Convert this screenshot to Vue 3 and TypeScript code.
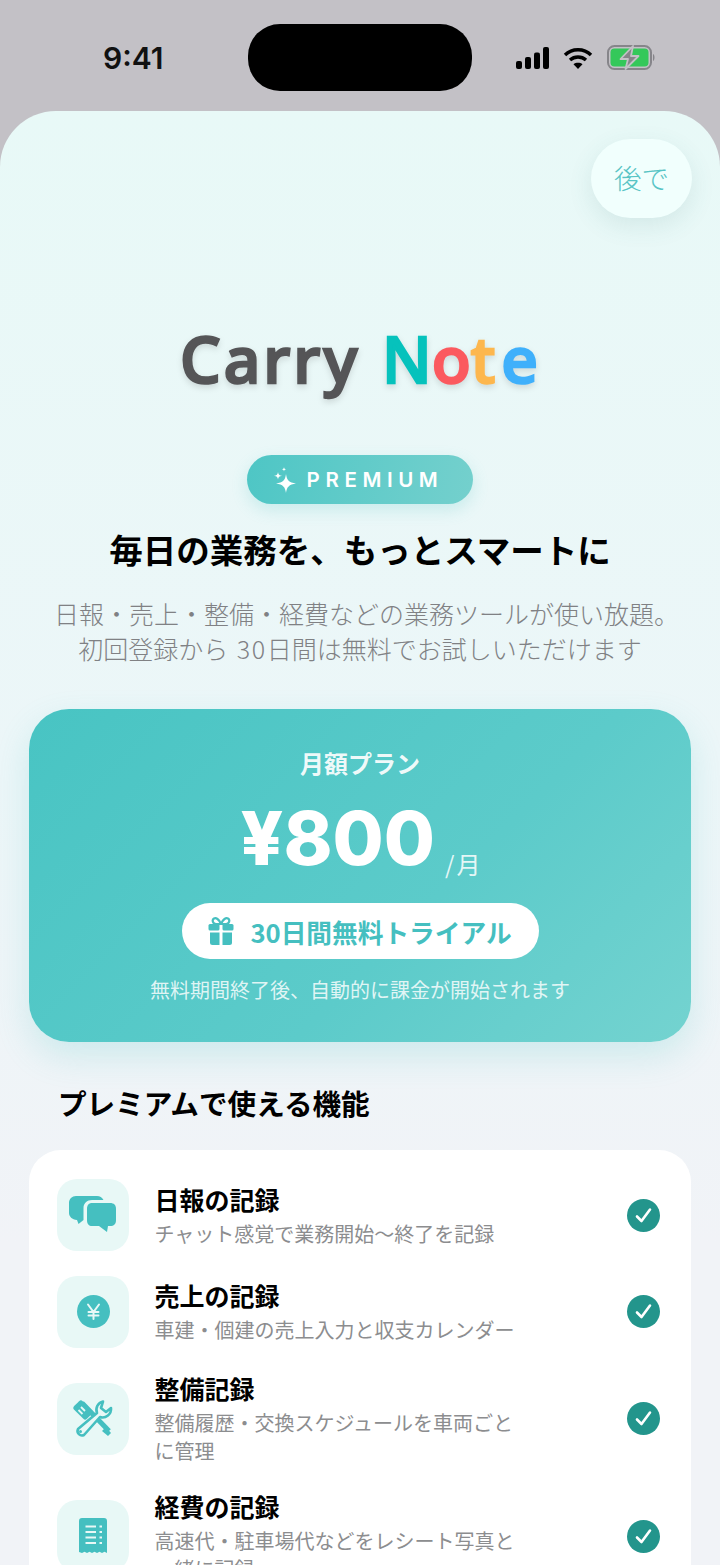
<script setup lang="ts">
type Feature = {
	id: string;
	title: string;
	desc: string;
};

const features: Feature[] = [
	{ id: 'chat', title: '日報の記録', desc: 'チャット感覚で業務開始〜終了を記録' },
	{ id: 'yen', title: '売上の記録', desc: '車建・個建の売上入力と収支カレンダー' },
	{ id: 'tools', title: '整備記録', desc: '整備履歴・交換スケジュールを車両ごとに管理' },
	{ id: 'receipt', title: '経費の記録', desc: '高速代・駐車場代などをレシート写真と一緒に記録' },
];
</script>

<template>
	<div class="screen">
		<header class="status-bar">
			<span class="time">9:41</span>
			<div class="island"></div>
			<div class="status-icons">
				<svg width="36" height="22" viewBox="0 0 36 22" fill="#000">
					<rect x="1" y="14" width="6" height="8" rx="2" />
					<rect x="10" y="10" width="6" height="12" rx="2" />
					<rect x="19" y="5.500" width="6" height="16.500" rx="2" />
					<rect x="28" y="0" width="6" height="22" rx="2" />
				</svg>
				<svg width="30" height="22" viewBox="0 0 30 22" fill="none" stroke="#000" stroke-width="3.400">
					<path d="M2 8 C9 1 21 1 28 8" />
					<path d="M7 13 C11.500 9 18.500 9 23 13" />
					<path d="M15 22 L10.500 17.200 C13 15.300 17 15.300 19.500 17.200 Z" fill="#000" stroke="none" />
				</svg>
				<svg class="battery" width="49" height="25" viewBox="0 0 49 25">
					<rect x="1" y="1" width="43" height="23" rx="6.500" fill="none" stroke="#86858a" stroke-width="2" />
					<rect x="3.500" y="3.500" width="38" height="18" rx="4" fill="#34c85a" />
					<path d="M46 9 C48 9.500 48 15.500 46 16 Z" fill="#86858a" />
					<path d="M26 1 L13.500 14 H21 L18.500 24 L31.500 11 H24 Z" fill="#86858a" stroke="#c3c1c6" stroke-width="1.800" stroke-linejoin="round" />
				</svg>
			</div>
		</header>

		<main class="sheet">
			<button class="later" type="button">後で</button>

			<h1 class="logo">
				<span class="logo-carry">Carry</span>
				<span class="c-teal">N</span>
				<span class="c-red">o</span>
				<span class="c-orange">t</span>
				<span class="c-blue">e</span>
			</h1>

			<div class="badge">
				<svg width="24" height="26" viewBox="0 0 24 26" fill="#fff">
					<path d="M13 7 C13.800 13 16 15.500 23 16.500 C16 17.500 13.800 20 13 26 C12.200 20 10 17.500 3 16.500 C10 15.500 12.200 13 13 7 Z" />
					<path d="M5 5 C5.300 7.500 6.200 8.400 9 8.800 C6.200 9.200 5.300 10.100 5 12.500 C4.700 10.100 3.800 9.200 1 8.800 C3.800 8.400 4.700 7.500 5 5 Z" />
					<path d="M11 0 C11.200 1.600 11.700 2.100 13.200 2.300 C11.700 2.500 11.200 3 11 4.600 C10.800 3 10.300 2.500 8.800 2.300 C10.300 2.100 10.800 1.600 11 0 Z" />
				</svg>
				<span>PREMIUM</span>
			</div>

			<h2 class="headline">毎日の業務を、もっとスマートに</h2>
			<p class="lead"><span class="lead-first">日報・売上・整備・経費などの業務ツールが使い放題。</span><br>初回登録から <span class="lead-num">30</span>日間は無料でお試しいただけます</p>

			<section class="plan">
				<div class="plan-name">月額プラン</div>
				<div class="price">
					<span class="amount">¥800</span>
					<span class="unit">/月</span>
				</div>
				<div class="trial">
					<svg width="26" height="28" viewBox="0 0 26 28" fill="#45bfc0">
						<path d="M13 7 C11 2 8 0.500 6 1.500 C3.500 3 5 7 8 7 Z M13 7 C15 2 18 0.500 20 1.500 C22.500 3 21 7 18 7 Z" fill="none" stroke="#45bfc0" stroke-width="2.200" />
						<rect x="0.500" y="7" width="11" height="6.500" rx="1.500" />
						<rect x="14.500" y="7" width="11" height="6.500" rx="1.500" />
						<path d="M2 15.500 H11.500 V28 H4.500 A2.500 2.500 0 0 1 2 25.500 Z" />
						<path d="M14.500 15.500 H24 V25.500 A2.500 2.500 0 0 1 21.500 28 H14.500 Z" />
					</svg>
					<span>30日間無料トライアル</span>
				</div>
				<p class="plan-note">無料期間終了後、自動的に課金が開始されます</p>
			</section>

			<h3 class="section-title">プレミアムで使える機能</h3>

			<section class="features">
				<div v-for="item in features" :key="item.id" class="feature">
					<div class="feature-icon">
						<svg v-if="item.id === 'chat'" width="48" height="38" viewBox="0 0 48 38" fill="#45bfc0">
							<path d="M7 0 H28 C31 0 33 1.500 34.500 4 H23 C18 4 14.500 7.500 14.500 12 V24 L9.500 28 L8 24 C3 23.500 0 20.500 0 17 V7 C0 3 3 0 7 0 Z" />
							<path d="M23 7 H41 C45 7 47 9 47 13 V24 C47 28 45 30 41 30 H39 L38 36 L30 30 H23 C20 30 18 28 18 24 V13 C18 9 20 7 23 7 Z" />
						</svg>
						<svg v-else-if="item.id === 'yen'" width="33" height="33" viewBox="0 0 33 33">
							<circle cx="16.500" cy="16.500" r="16.500" fill="#45bfc0" />
							<path d="M11 9.500 L16.500 17 L22 9.500 M16.500 17 V24 M11.500 17 H21.500 M11.500 20.500 H21.500" fill="none" stroke="#e8f8f6" stroke-width="2" stroke-linecap="round" />
						</svg>
						<svg v-else-if="item.id === 'tools'" width="40" height="38" viewBox="0 0 40 38">
							<path d="M9 3 L36 31" fill="none" stroke="#45bfc0" stroke-width="5" />
							<path d="M33 27 L38 33 L35 36 L29 31 Z" fill="#45bfc0" />
							<rect x="-6" y="-9" width="12" height="18" rx="2.500" transform="translate(10 10) rotate(-45)" fill="#45bfc0" />
							<path d="M8 7 L12 11 M5.500 10 L9.500 14" fill="none" stroke="#e8f8f6" stroke-width="1.800" />
							<path d="M30 1.500 A8.500 8.500 0 0 0 24 13 L5 29 A4.500 4.500 0 0 0 11 35 L27 17 A8.500 8.500 0 0 0 38 8 L33 12 L28 8 Z" fill="#e8f8f6" stroke="#45bfc0" stroke-width="2.600" stroke-linejoin="round" />
							<circle cx="7.500" cy="31.500" r="1.500" fill="#45bfc0" />
						</svg>
						<svg v-else width="28" height="36" viewBox="0 0 28 36">
							<path d="M3 0 H25 A3 3 0 0 1 28 3 V35 L25.500 33.800 L23 35 L20.500 33.800 L18 35 L15.500 33.800 L13 35 L10.500 33.800 L8 35 L5.500 33.800 L3 35 L0 34 V3 A3 3 0 0 1 3 0 Z" fill="#45bfc0" />
							<path d="M6.500 8.500 H17 M6.500 14 H17 M6.500 19.500 H17 M6.500 25 H17 M20.500 8.500 H23 M20.500 14 H23 M20.500 19.500 H23 M20.500 25 H23" stroke="#e8f8f6" stroke-width="1.800" />
						</svg>
					</div>
					<div class="feature-text">
						<div class="feature-title">{{ item.title }}</div>
						<div class="feature-desc">{{ item.desc }}</div>
					</div>
					<svg class="check" width="33" height="33" viewBox="0 0 33 33">
						<circle cx="16.500" cy="16.500" r="16.500" fill="#23958c" />
						<path d="M10 17.500 L14.500 22 L23 10.500" fill="none" stroke="#fff" stroke-width="2.600" stroke-linecap="round" stroke-linejoin="round" />
					</svg>
				</div>
			</section>
		</main>
	</div>
</template>

<style>
html,
body {
	margin: 0;
	background: #c3c1c6;
}
</style>

<style scoped>
.screen {
	width: 720px;
	height: 1565px;
	overflow: hidden;
	background: #c3c1c6;
	font-family: Inter, "Noto Sans CJK JP", sans-serif;
	color: #000;
}

.status-bar {
	height: 111px;
	box-sizing: border-box;
	padding: 24px 0 0 103px;
	display: flex;
	align-items: flex-start;
}

.time {
	width: 145px;
	flex: 0 0 auto;
	margin-top: 16px;
	font-size: 30px;
	line-height: 36px;
	font-weight: 600;
	color: #111;
}

.island {
	width: 224px;
	height: 67px;
	flex: 0 0 auto;
	border-radius: 32px;
	background: #000;
}

.status-icons {
	margin-left: 43px;
	margin-top: 21px;
	display: flex;
	align-items: center;
	gap: 12px;
	flex: 0 0 auto;
}

.battery {
	margin-left: 2px;
}

.sheet {
	position: relative;
	height: 1454px;
	box-sizing: border-box;
	padding: 218px 29px 0;
	border-radius: 56px 56px 0 0;
	background: linear-gradient(180deg, #e8f9f7 0%, #ecf6f8 45%, #f1f3f7 78%);
	display: flex;
	flex-direction: column;
	align-items: center;
}

.sheet > * {
	flex-shrink: 0;
}

.later {
	position: absolute;
	top: 28px;
	right: 28px;
	width: 101px;
	height: 79px;
	padding: 0 0 3px;
	border: none;
	border-radius: 40px;
	background: #f1fffd;
	box-shadow: 0 8px 24px rgba(60, 120, 120, 0.12);
	color: #58c4c5;
	font-family: "Noto Sans CJK JP", sans-serif;
	font-size: 27.500px;
	font-weight: 300;
}

.logo {
	margin: 0;
	width: 360px;
	height: 72px;
	display: flex;
	font-family: "Noto Sans", sans-serif;
	font-size: 64px;
	line-height: 60px;
	font-weight: 500;
	-webkit-text-stroke: 2.500px currentColor;
	filter: blur(0.6px) drop-shadow(0 3px 3px rgba(0, 0, 0, 0.12));
}

.logo-carry {
	width: 202px;
	color: #555557;
	letter-spacing: 3px;
}

.c-teal {
	color: #06c2bc;
}

.c-red {
	color: #fb5a5f;
}

.c-orange {
	color: #fdb74e;
}

.c-blue {
	margin-left: 6px;
	color: #3fb0fb;
}

.badge {
	margin-top: 54px;
	width: 226px;
	height: 49px;
	box-sizing: border-box;
	padding-right: 4px;
	border-radius: 25px;
	background: linear-gradient(100deg, #4ec6c5, #74d0cd);
	box-shadow: 0 6px 16px rgba(78, 198, 197, 0.22);
	display: flex;
	align-items: center;
	justify-content: center;
	gap: 10px;
	color: #fff;
	font-size: 20.500px;
	font-weight: 600;
	letter-spacing: 5.600px;
}

.headline {
	margin: 25px 0 0;
	font-family: "Noto Sans CJK JP", sans-serif;
	font-size: 33.500px;
	line-height: 40px;
	font-weight: 700;
	color: #000;
}

.lead {
	margin: 27px -10px 0;
	text-align: center;
	font-family: "Noto Sans CJK JP", sans-serif;
	font-size: 25px;
	line-height: 35px;
	font-weight: 300;
	color: #808184;
	white-space: nowrap;
	word-spacing: 3px;
}

.lead-first {
	margin-right: -13px;
}

.lead-num {
	letter-spacing: 1.500px;
}

.plan {
	align-self: stretch;
	margin-top: 43px;
	height: 333px;
	box-sizing: border-box;
	padding-top: 38px;
	border-radius: 40px;
	background: linear-gradient(135deg, #48c4c3 0%, #5ccbca 60%, #74d3d0 100%);
	box-shadow: 0 14px 34px rgba(72, 196, 195, 0.2);
	display: flex;
	flex-direction: column;
	align-items: center;
	color: #fff;
	font-family: "Noto Sans CJK JP", sans-serif;
}

.plan-name {
	font-size: 24px;
	line-height: 34px;
	font-weight: 600;
	margin-top: -1px;
	color: rgba(255, 255, 255, 0.92);
}

.price {
	margin-top: 17px;
	height: 82px;
	padding-left: 3px;
	display: flex;
	align-items: flex-end;
	gap: 10px;
}

.amount {
	font-family: Inter, sans-serif;
	font-size: 74px;
	line-height: 82px;
	font-weight: 800;
}

.unit {
	font-size: 24px;
	line-height: 34px;
	margin-bottom: -2px;
	letter-spacing: 2px;
	color: rgba(255, 255, 255, 0.85);
}

.trial {
	margin-top: 24px;
	width: 357px;
	height: 56px;
	border-radius: 28px;
	background: #fff;
	display: flex;
	align-items: center;
	justify-content: center;
	gap: 16px;
	color: #45bfc0;
	font-size: 25.700px;
	font-weight: 700;
}

.plan-note {
	margin: 16px 0 0;
	font-size: 20px;
	line-height: 30px;
	color: rgba(255, 255, 255, 0.82);
}

.section-title {
	align-self: stretch;
	margin: 41px 0 0 29px;
	font-family: "Noto Sans CJK JP", sans-serif;
	font-size: 28.600px;
	line-height: 40px;
	font-weight: 700;
}

.features {
	align-self: stretch;
	margin-top: 27px;
	padding: 29px 31px 60px 28px;
	border-radius: 32px;
	background: #fff;
	display: flex;
	flex-direction: column;
	gap: 24.500px;
	font-family: "Noto Sans CJK JP", sans-serif;
}

.feature {
	display: flex;
	align-items: center;
}

.feature-icon {
	width: 72px;
	height: 72px;
	flex: 0 0 auto;
	border-radius: 20px;
	background: #e8f8f6;
	display: flex;
	align-items: center;
	justify-content: center;
}

.feature-text {
	width: 370px;
	margin-left: 25.500px;
}

.feature-title {
	font-size: 25px;
	line-height: 32px;
	font-weight: 700;
	margin-bottom: 5px;
}

.feature-desc {
	font-size: 20px;
	line-height: 28px;
	color: #8c8d8f;
}

.check {
	margin-left: auto;
	flex: 0 0 auto;
}
</style>
